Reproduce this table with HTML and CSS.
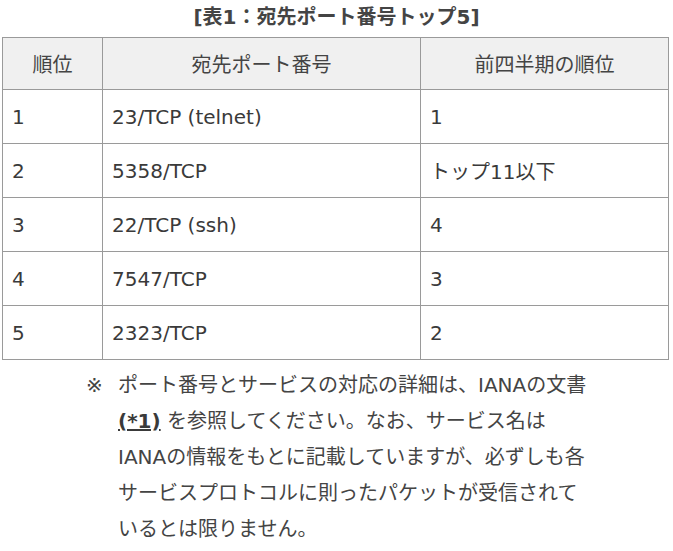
FILE: index.html
```html
<!DOCTYPE html>
<html lang="ja">
<head>
<meta charset="utf-8">
<link rel="stylesheet" href="styles.css">
</head>
<body>
<div class="page">
  <h3 class="caption">[表1：宛先ポート番号トップ5]</h3>
  <table class="rank">
    <thead>
      <tr><th class="c1">順位</th><th class="c2">宛先ポート番号</th><th class="c3">前四半期の順位</th></tr>
    </thead>
    <tbody>
      <tr><td>1</td><td>23/TCP (telnet)</td><td>1</td></tr>
      <tr><td>2</td><td>5358/TCP</td><td>トップ11以下</td></tr>
      <tr><td>3</td><td>22/TCP (ssh)</td><td>4</td></tr>
      <tr><td>4</td><td>7547/TCP</td><td>3</td></tr>
      <tr><td>5</td><td>2323/TCP</td><td>2</td></tr>
    </tbody>
  </table>
  <div class="note">
    <span class="mark">※</span>
    <p class="note-text">ポート番号とサービスの対応の詳細は、IANAの文書<br><a class="ref">(*1)</a> を参照してください。なお、サービス名は<br>IANAの情報をもとに記載していますが、必ずしも各<br>サービスプロトコルに則ったパケットが受信されて<br>いるとは限りません。</p>
  </div>
</div>
</body>
</html>
```

FILE: styles.css
```css
html, body {
  margin: 0;
  padding: 0;
  background: #ffffff;
}

body {
  font-family: "DejaVu Sans", "Noto Sans CJK JP", sans-serif;
  font-size: 20px;
  color: #3a3a3a;
}

.page {
  width: 673px;
}

.caption {
  margin: 0;
  height: 37px;
  line-height: 34px;
  font-size: 20px;
  font-weight: bold;
  text-align: center;
  color: #444444;
}

.rank {
  margin-left: 2px;
  width: 667px;
  border-collapse: collapse;
  table-layout: fixed;
}

.rank th,
.rank td {
  border: 1.5px solid #9a9a9a;
  padding: 0 0 0 9px;
  text-align: left;
  font-weight: normal;
  white-space: nowrap;
}

.rank th {
  height: 51px;
  background: #f0f0f0;
  text-align: center;
  padding: 0;
  color: #444444;
}

.rank td {
  height: 53px;
}

.c1 { width: 99px; }
.c2 { width: 317px; }
.c3 { width: auto; }

.note {
  display: flex;
  margin-top: 7px;
  padding-left: 86px;
  line-height: 36px;
  color: #444444;
}

.mark {
  width: 32px;
  flex: none;
}

.note-text {
  margin: 0;
  white-space: nowrap;
}

.ref {
  font-weight: bold;
  text-decoration: underline;
  color: #3a3a3a;
}
```
